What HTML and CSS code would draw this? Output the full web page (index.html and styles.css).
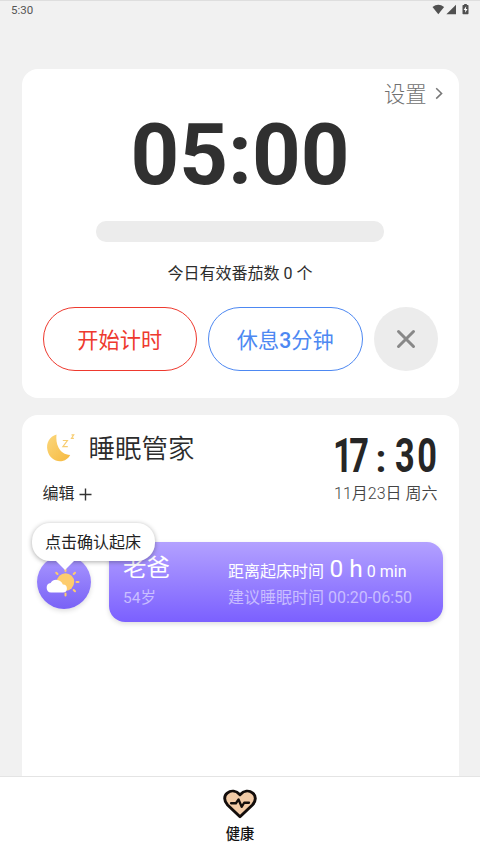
FILE: index.html
```html
<!DOCTYPE html>
<html lang="zh-CN">
<head>
<meta charset="utf-8">
<meta name="viewport" content="width=device-width, initial-scale=1">
<title>健康</title>
<link rel="stylesheet" href="styles.css">
</head>
<body>
<header class="status">
  <span>5:30</span>
  <svg class="status-icons" width="37" height="12" viewBox="0 0 37 12">
    <path d="M.5 3Q6.300-1.400 12.100 3L6.300 10.300Z"/>
    <path d="M24 .700v9.600H14.400z"/>
    <path d="M31.200.900h1V0h2.600v.9h1q.7 0 .7.7v8q0 .7-.7.7h-4.600q-.7 0-.7-.7v-8q0-.7.7-.7z"/>
    <path class="bolt" d="M34.200 2.200 31.600 6h1.600v2.800L35.500 5h-1.600z"/>
  </svg>
</header>
<main>
  <section class="card timer">
    <div class="settings"><span>设置</span>
      <svg width="8" height="13" viewBox="0 0 8 13"><path d="M1.200 1.200 6.600 6.400 1.200 11.600"/></svg>
    </div>
    <div class="countdown">05:00</div>
    <div class="progress"></div>
    <p class="count">今日有效番茄数 0 个</p>
    <div class="actions">
      <button class="pill start">开始计时</button>
      <button class="pill rest">休息<b>3</b>分钟</button>
      <button class="close" aria-label="关闭">
        <svg width="20" height="20" viewBox="0 0 20 20"><path d="M2.500 2.500 17.500 17.500M17.500 2.500 2.500 17.500"/></svg>
      </button>
    </div>
  </section>
  <section class="card sleep">
    <div class="sleep-head">
      <div>
        <h2 class="title">
          <svg width="30" height="32" viewBox="0 0 30 32">
            <defs><linearGradient id="moon" x1="0" y1="0" x2="1" y2="1"><stop offset="0" stop-color="#fbd77c"/><stop offset="1" stop-color="#f6b93f"/></linearGradient></defs>
            <path fill="url(#moon)" d="M11.500 2.500C4.500 4.500.800 11 2.500 18.500 4.100 26 11 30.500 17.500 29c3.500-.8 6-2.900 7.700-6-5.500-.3-9.500-3-11.700-7.500C11.500 11.500 11 7 11.500 2.500z"/>
            <path class="zed" d="M17.800 8.500h4.600l-4.500 6.200h4.900M26.500 2.800h2.200l-2.200 3.500h2.400"/>
          </svg>
          <span>睡眠管家</span>
        </h2>
        <div class="edit">编辑<svg width="13" height="13" viewBox="0 0 13 13"><path d="M6.500.500v12M.500 6.500h12"/></svg></div>
      </div>
      <div class="side">
        <div class="clock"><span class="hours">17</span><span class="colon">:</span><span class="minutes">30</span></div>
        <div class="date">11月23日 周六</div>
      </div>
    </div>
    <div class="member">
      <div class="avatar">
        <svg width="34" height="30" viewBox="0 0 34 30">
          <g class="rays"><path d="M19.500 2v2M19.500 26.500v2M10.200 5.700l1.300 1.300M29 5.700l-1.300 1.300M32.500 15h-2M29 24.300l-1.300-1.300"/></g>
          <circle cx="19.500" cy="15" r="8.700"/>
          <path class="cloud" d="M5 25.500a4.800 4.800 0 0 1-.4-9.500 6.800 6.800 0 0 1 12.200 1.500 4 4 0 0 1 .2 8z"/>
        </svg>
        <div class="tip">点击确认起床</div>
      </div>
      <article class="plan">
        <div class="person"><div class="name">老爸</div><div class="age">54岁</div></div>
        <div class="times">
          <div class="remain">距离起床时间 <span>0 h</span> 0 min</div>
          <div class="advice">建议睡眠时间 00:20-06:50</div>
        </div>
      </article>
    </div>
  </section>
</main>
<nav class="tabs">
  <svg width="34" height="31" viewBox="0.500 0 35 32">
    <path class="heart" d="M18 28.700 5.200 16.500C1.200 12.500 1.300 7 4.800 4.200 8.800 1 14 1.600 18 6c4-4.400 9.200-5 13.200-1.800 3.500 2.800 3.600 8.300-.4 12.300z"/>
    <path class="pulse" d="M8.800 14.700h5l2.700-3.900 3.200 7.600 2.600-4.200h5"/>
  </svg>
  <span>健康</span>
</nav>
</body>
</html>
```
FILE: styles.css
```css
* { box-sizing: border-box; }
body {
  margin: 0;
  height: 853px;
  overflow: hidden;
  display: flex;
  flex-direction: column;
  background: #f1f1f1;
  color: #2c2c2c;
  font-family: Roboto, "Noto Sans CJK SC", sans-serif;
  font-size: 16px;
}
svg { display: block; flex: none; }
.status {
  height: 69px;
  flex: none;
  border-top: 1px solid #dedede;
  padding: 3px 11px 0;
  display: flex;
  justify-content: space-between;
  align-items: flex-start;
  font-size: 11.500px;
  line-height: 13px;
  color: #555;
}
.status-icons { fill: #505050; }
.status-icons .bolt { fill: #fff; }
main {
  flex: 1;
  min-height: 0;
  overflow: hidden;
  padding: 0 21.500px;
  display: flex;
  flex-direction: column;
  gap: 17px;
}
.card { background: #fff; border-radius: 16px; flex: none; }
.timer {
  height: 329px;
  display: flex;
  flex-direction: column;
  align-items: center;
}
.settings {
  align-self: flex-end;
  display: flex;
  align-items: center;
  gap: 8px;
  padding-right: 16px;
  margin-top: 9px;
  height: 30px;
  font-size: 21.300px;
  line-height: 30px;
  font-weight: 300;
  color: #707070;
}
.settings span { padding-top: 3px; }
.settings svg { fill: none; stroke: #777; stroke-width: 1.5; }
.countdown {
  margin-top: -4px;
  height: 100px;
  line-height: 102px;
  font-size: 85px;
  font-weight: 700;
  color: #303030;
}
.progress {
  width: 288px;
  height: 21px;
  margin-top: 17px;
  border-radius: 10px;
  background: #ececec;
}
.count { margin: 20px 0 0; line-height: 24px; }
.actions { display: flex; gap: 11px; margin-top: 21px; }
.actions button { height: 64px; padding: 0 0 2px; font-family: inherit; }
.pill {
  width: 154.500px;
  border-radius: 32px;
  background: #fff;
  border: 1px solid currentColor;
  font-size: 21.200px;
  font-weight: 400;
}
.pill b { font-weight: 500; }
.start { color: #ee392e; }
.rest { color: #4d88f2; }
.actions .close {
  width: 64px;
  padding: 0;
  border: 0;
  border-radius: 50%;
  background: #ececec;
  display: grid;
  place-items: center;
}
.close svg { stroke: #888; stroke-width: 3; stroke-linecap: round; }
.sleep { height: 380px; }
.sleep-head {
  height: 127px;
  padding: 16px 21px 0;
  display: flex;
  justify-content: space-between;
}
.title {
  margin: 0;
  height: 34px;
  display: flex;
  align-items: center;
  gap: 14px;
  padding-left: 2px;
  font-size: 26.500px;
  line-height: 34px;
  font-weight: 350;
}
.title span { padding-top: 2px; }
.zed { fill: none; stroke: #f7cd72; stroke-width: 1.2; }
.edit {
  display: flex;
  align-items: center;
  gap: 4px;
  margin-top: 17px;
  line-height: 24px;
}
.edit svg { stroke: #333; stroke-width: 1.4; }
.side { width: 105px; }
.clock {
  display: flex;
  height: 50px;
  line-height: 50px;
  font-size: 49px;
  font-weight: 700;
  color: #262626;
}
.clock span { flex: none; transform: scaleX(.7); transform-origin: 0 50%; }
.hours { width: 43px; letter-spacing: -5px; }
.clock .colon { width: 19.500px; font-size: 39px; line-height: 56px; transform: none; }
.minutes { width: 43px; letter-spacing: 3.500px; }
.date {
  margin: 1px 0 0 -2px;
  line-height: 24px;
  text-align: right;
  white-space: nowrap;
  font-weight: 350;
  color: #444;
}
.member {
  display: flex;
  align-items: center;
  gap: 18px;
  padding-left: 15.500px;
}
.avatar {
  position: relative;
  z-index: 1;
  width: 54px;
  height: 54px;
  border-radius: 50%;
  background: linear-gradient(#aa98ff, #7962f6);
  box-shadow: 0 2px 5px #0002;
  display: grid;
  place-items: center;
}
.avatar svg { margin-left: -2px; }
.avatar circle { fill: #fdcc6e; }
.rays { fill: none; stroke: #fdcc6e; stroke-width: 2; stroke-linecap: round; }
.cloud { fill: #fff; }
.tip {
  position: absolute;
  left: -5.500px;
  top: -32px;
  width: 123px;
  height: 38px;
  border-radius: 18px;
  background: #fff;
  box-shadow: 0 1px 5px #0005;
  line-height: 40px;
  text-align: center;
  white-space: nowrap;
  color: #222;
}
.tip::after {
  content: "";
  position: absolute;
  left: 23px;
  top: 37px;
  border: 10px solid transparent;
  border-top: 10px solid #fff;
  border-bottom: 0;
}
.plan {
  width: 334px;
  height: 80px;
  border-radius: 16px;
  background: linear-gradient(#b3a1ff, #7b60ff);
  box-shadow: 0 2px 5px #0002;
  padding: 9px 14px 0;
  display: flex;
  color: #fff;
}
.person { width: 105px; }
.name { font-size: 23.500px; line-height: 34px; }
.age { margin-top: 1px; font-size: 15.500px; line-height: 24px; color: #fff8; }
.times { white-space: nowrap; }
.remain { line-height: 35px; height: 35px; }
.remain span { font-size: 24.500px; margin-left: 1.500px; }
.advice { line-height: 24px; color: #fff8; }
.tabs {
  height: 77px;
  flex: none;
  background: #fff;
  border-top: 1px solid #e4e4e4;
  display: flex;
  flex-direction: column;
  align-items: center;
  padding-top: 12px;
  font-size: 14.300px;
  line-height: 20px;
  font-weight: 500;
  color: #111;
}
.tabs span { margin-top: 4px; }
.heart { fill: #f2cba7; stroke: #130d0b; stroke-width: 3; stroke-linejoin: round; }
.pulse { fill: none; stroke: #130d0b; stroke-width: 2.400; stroke-linejoin: round; stroke-linecap: round; }
```
